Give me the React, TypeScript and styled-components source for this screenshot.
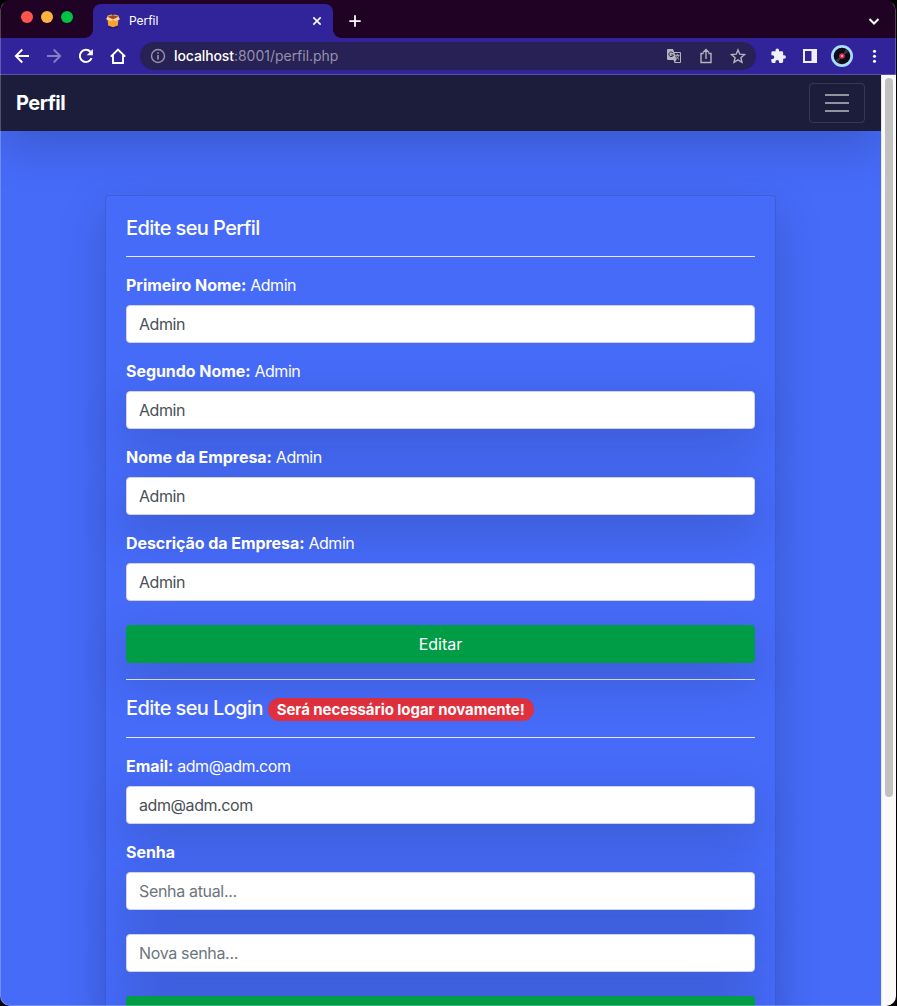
import React from "react";
import styled, { createGlobalStyle, css } from "styled-components";

const GlobalStyle = createGlobalStyle`
  *, *::before, *::after { box-sizing: border-box; }
  html, body { margin: 0; height: 100%; overflow: hidden; background: #000; }
  body { font-family: Inter, "Liberation Sans", sans-serif; font-size: 16px; line-height: 1.5; color: #fff; }
`;

const shadow = css`
  box-shadow: 0 16px 48px rgba(0, 0, 0, 0.175);
`;

const Window = styled.div`
  position: relative;
  display: flex;
  flex-direction: column;
  width: 896px;
  height: 1006px;
  border-radius: 10px;
  overflow: hidden;
  background: #200324;
  &::after {
    content: "";
    position: absolute;
    inset: 0;
    border: 1px solid rgba(255, 255, 255, 0.24);
    border-top-color: transparent;
    border-radius: 10px;
    pointer-events: none;
  }
`;

const TabStrip = styled.div`
  display: flex;
  height: 38px;
  flex: none;
  padding-left: 21px;
`;

const Lights = styled.div`
  display: flex;
  gap: 8px;
  padding-top: 11px;
  width: 72px;
`;

const Light = styled.span<{ $color: string }>`
  width: 12px;
  height: 12px;
  border-radius: 50%;
  background: ${(p) => p.$color};
`;

const Tab = styled.div`
  position: relative;
  display: flex;
  align-items: center;
  width: 240px;
  height: 34px;
  margin-top: 4px;
  padding: 0 9px 0 12px;
  border-radius: 8px 8px 0 0;
  background: #31239a;
  &::before, &::after {
    content: "";
    position: absolute;
    bottom: 0;
    width: 8px;
    height: 8px;
  }
  &::before { left: -8px; background: radial-gradient(circle at 0 0, transparent 7.5px, #31239a 8px); }
  &::after { right: -8px; background: radial-gradient(circle at 100% 0, transparent 7.5px, #31239a 8px); }
`;

const TabTitle = styled.span`
  flex: 1;
  margin-left: 8px;
  font-size: 12px;
  line-height: 16px;
  letter-spacing: -0.05px;
`;

const NewTab = styled.div`
  display: flex;
  flex: 1;
  align-items: center;
  justify-content: space-between;
  padding: 4px 14px 0 15px;
`;

const Toolbar = styled.div`
  display: flex;
  align-items: center;
  flex: none;
  height: 37px;
  padding: 0 13px 1px 14px;
  background: #31239a;
  border-bottom: 1px solid #5b50ae;
`;

const NavIcons = styled.div`
  display: flex;
  gap: 16px;
  width: 126px;
`;

const AddressBar = styled.div`
  display: flex;
  align-items: center;
  width: 616px;
  height: 28px;
  padding: 0 10px;
  border-radius: 14px;
  background: #282156;
`;

const Url = styled.span`
  flex: 1;
  margin-left: 8px;
  font-size: 14px;
  line-height: 20px;
  letter-spacing: -0.02px;
  color: #9491ab;
  b { font-weight: 500; letter-spacing: -0.1px; color: #fff; }
`;

const AddressIcons = styled.div`
  display: flex;
  gap: 16px;
`;

const Extensions = styled.div`
  display: flex;
  align-items: center;
  gap: 14px;
  flex: 1;
  padding-left: 14px;
`;

const Viewport = styled.div`
  display: flex;
  flex: 1;
  min-height: 0;
`;

const Page = styled.div`
  display: flex;
  flex-direction: column;
  width: 881px;
  overflow: hidden;
  background: #466bf9;
`;

const Navbar = styled.nav`
  display: flex;
  flex: none;
  align-items: center;
  justify-content: space-between;
  height: 56px;
  padding: 0 16px;
  background: #1c1c3b;
  ${shadow}
`;

const Brand = styled.span`
  font-size: 20px;
  font-weight: 700;
  line-height: 30px;
  letter-spacing: -0.5px;
`;

const Toggler = styled.div`
  display: flex;
  align-items: center;
  justify-content: center;
  width: 56px;
  height: 40px;
  border: 1px solid rgba(255, 255, 255, 0.12);
  border-radius: 4px;
`;

const Card = styled.main`
  flex: none;
  align-self: center;
  width: 671px;
  height: 900px;
  margin-top: 64px;
  padding: 20px;
  border: 1px solid rgba(0, 0, 0, 0.125);
  border-radius: 4px;
  background: #466bf9;
  ${shadow}
`;

const Heading = styled.h5<{ $height?: number }>`
  margin: 0;
  height: ${(p) => p.$height ?? 24}px;
  font-size: 20px;
  font-weight: 500;
  line-height: 24px;
  letter-spacing: -0.6px;
  white-space: nowrap;
`;

const Badge = styled.span`
  display: inline-block;
  padding: 4px 9px;
  border-radius: 160px;
  background: #e3313f;
  font-size: 15px;
  font-weight: 700;
  line-height: 15px;
  letter-spacing: -0.05px;
`;

const Rule = styled.hr`
  height: 1px;
  margin: 16px 0;
  border: 0;
  background: #e6e9f8;
`;

const Group = styled.div<{ $gap?: number }>`
  position: relative;
  margin-bottom: ${(p) => p.$gap ?? 16}px;
`;

const Label = styled.label`
  display: block;
  margin-bottom: 8px;
  line-height: 24px;
  letter-spacing: -0.48px;
  b { font-weight: 700; letter-spacing: -0.06px; }
`;

const Input = styled.input<{ $flat?: boolean }>`
  position: relative;
  display: block;
  width: 100%;
  height: 38px;
  padding: 6px 12px;
  border: 1px solid #ced4da;
  border-radius: 4px;
  background: #fff;
  color: #495057;
  font: inherit;
  letter-spacing: -0.42px;
  outline: none;
  &::placeholder { color: #6c757d; opacity: 1; letter-spacing: -0.33px; }
  ${(p) => !p.$flat && shadow}
`;

const Submit = styled.button`
  position: relative;
  display: block;
  width: 100%;
  height: 38px;
  padding: 0;
  border: 0;
  border-radius: 4px;
  background: #009c46;
  color: #fff;
  font: inherit;
  ${shadow}
`;

const Scrollbar = styled.div`
  width: 15px;
  padding: 3px 3px 0;
  background: #fafafa;
  border-left: 1px solid #e8e8e8;
`;

const Thumb = styled.div`
  width: 8px;
  height: 719px;
  border-radius: 4px;
  background: #c1c1c1;
`;

const Stroke = ({ d, size = 16, color = "#fff", w = 1.8 }: { d: string; size?: number; color?: string; w?: number }) => (
  <svg width={size} height={size} viewBox="0 0 16 16" fill="none" stroke={color} strokeWidth={w}>
    <path d={d} />
  </svg>
);

const BoxIcon = () => (
  <svg width="16" height="16" viewBox="0 0 16 16">
    <ellipse cx="8" cy="14.3" rx="5" ry="1" fill="#241a66" />
    <path d="M2.5 6h11l-.7 6.500L8 14.200l-4.800-1.700z" fill="#f9a233" />
    <path d="M2.500 3.800 8 2l5.500 1.800L8 6.500z" fill="#a8481a" />
    <path d="M2.500 3.800 8 6.200 6.300 8.300 1 6.300zM13.500 3.800 8 6.200l1.700 2.100L15 6.300z" fill="#ffd597" />
    <path d="M2.500 3.800 1.700 3 6.500 1.500 8 2.200zM13.500 3.800l.8-.8L9.500 1.500 8 2.200z" fill="#f6b562" />
  </svg>
);

const Field = ({ label, value, flat, gap }: { label: string; value: string; flat?: boolean; gap?: number }) => (
  <Group $gap={gap}>
    <Label><b>{label}</b> {value}</Label>
    <Input defaultValue={value} $flat={flat} />
  </Group>
);

export default function App() {
  return (
    <>
      <GlobalStyle />
      <Window>
        <TabStrip>
          <Lights>
            <Light $color="#ff554f" />
            <Light $color="#ffb33f" />
            <Light $color="#00c144" />
          </Lights>
          <Tab>
            <BoxIcon />
            <TabTitle>Perfil</TabTitle>
            <Stroke d="M3.800 3.800l8.400 8.400M12.200 3.800l-8.400 8.400" size={14} w={1.8} />
          </Tab>
          <NewTab>
            <Stroke d="M8 1.500v13M1.500 8h13" size={14} w={2} />
            <Stroke d="M3.500 6 8 10.500 12.500 6" w={2} />
          </NewTab>
        </TabStrip>
        <Toolbar>
          <NavIcons>
            <Stroke d="M15 8H2M8.300 1.500 1.800 8l6.500 6.500" w={1.9} />
            <Stroke d="M1 8h13M7.700 1.500 14.200 8l-6.500 6.500" color="#857cc3" w={1.9} />
            <svg width="16" height="16" viewBox="0 0 16 16" fill="none">
              <path d="M13.600 10.200A6.100 6.100 0 1 1 12.400 3.700" stroke="#fff" strokeWidth="2" />
              <path d="M14.900 1v6.200H8.700z" fill="#fff" />
            </svg>
            <Stroke d="M.8 8.700 8 1.500l7.200 7.200M3 7v8h10V7" w={1.9} />
          </NavIcons>
          <AddressBar>
            <svg width="16" height="16" viewBox="0 0 16 16" fill="none" stroke="#9895a6" strokeWidth="1.4">
              <circle cx="8" cy="8" r="6.500" />
              <path d="M8 7v4.500M8 4.200v1.600" strokeWidth="1.7" />
            </svg>
            <Url><b>localhost</b>:8001/perfil.php</Url>
            <AddressIcons>
              <svg width="16" height="16" viewBox="0 0 16 16">
                <path d="M2 1h5l1.200 3H14a1 1 0 0 1 1 1v9a1 1 0 0 1-1 1H8.500l-1-3H2a1 1 0 0 1-1-1V2a1 1 0 0 1 1-1z" fill="#b5b3bb" />
                <path d="M8.600 5H14v9H9l1.500-2z" fill="#282156" />
                <path d="M7.200 5.200A2.300 2.300 0 1 0 7.400 7H5.200" fill="none" stroke="#282156" strokeWidth="1" />
                <path d="M9.200 7.300h4.300M11.300 6v1.300M12.700 7.500c-.4 1.700-1.500 2.900-3 3.800M10.300 8.300c.6 1.300 1.500 2.400 2.700 3.200" fill="none" stroke="#b5b3bb" strokeWidth="1" />
              </svg>
              <Stroke d="M5.500 5.500H3v9h10v-9h-2.500M8 11V2M5 4.600l3-3 3 3" color="#b5b3bb" w={1.4} />
              <Stroke d="M8 1.900l1.800 4.300 4.700.4-3.600 3.100 1.100 4.600L8 11.900l-4 2.400 1.100-4.600-3.600-3.100 4.700-.4z" color="#b5b3bb" w={1.4} />
            </AddressIcons>
          </AddressBar>
          <Extensions>
            <svg width="18" height="18" viewBox="0 0 26 26" fill="#f1f0fa">
              <path d="M20.500 12H19V8a2 2 0 0 0-2-2h-4V4.500a2.500 2.500 0 0 0-5 0V6H4a2 2 0 0 0-2 2v3.800h1.500a2.700 2.700 0 0 1 0 5.400H2V21a2 2 0 0 0 2 2h3.800v-1.500a2.700 2.700 0 0 1 5.400 0V23H17a2 2 0 0 0 2-2v-4h1.500a2.500 2.500 0 0 0 0-5z" />
            </svg>
            <svg width="15" height="14" viewBox="0 0 15 14">
              <path fillRule="evenodd" d="M1 0h14v14H1zM3 2v10h6.500V2z" fill="#f1f0fa" />
            </svg>
            <svg width="22" height="22" viewBox="0 0 22 22">
              <circle cx="11" cy="11" r="11" fill="#a9dcfb" />
              <circle cx="11" cy="11" r="8.300" fill="#0d0c16" />
              <path d="M11 11 15 4.200A8 8 0 0 1 17.500 7zM11 11 7 17.800A8 8 0 0 1 4.500 15z" fill="#34353f" />
              <circle cx="11" cy="11" r="2.800" fill="#d9285e" />
              <circle cx="11" cy="11" r="1.200" fill="#ffa890" />
            </svg>
            <svg width="16" height="16" viewBox="0 0 16 16" fill="#fff">
              <circle cx="7.500" cy="3.300" r="1.550" />
              <circle cx="7.500" cy="8.200" r="1.550" />
              <circle cx="7.500" cy="13.200" r="1.550" />
            </svg>
          </Extensions>
        </Toolbar>
        <Viewport>
          <Page>
            <Navbar>
              <Brand>Perfil</Brand>
              <Toggler>
                <svg width="24" height="18" viewBox="0 0 24 18" stroke="#93939f" strokeWidth="2">
                  <path d="M0 1h24M0 9h24M0 17h24" />
                </svg>
              </Toggler>
            </Navbar>
            <Card>
              <Heading>Edite seu Perfil</Heading>
              <Rule />
              <Field label="Primeiro Nome:" value="Admin" flat />
              <Field label="Segundo Nome:" value="Admin" />
              <Field label="Nome da Empresa:" value="Admin" />
              <Field label="Descrição da Empresa:" value="Admin" flat gap={24} />
              <Submit>Editar</Submit>
              <Rule />
              <Heading $height={25}>Edite seu Login <Badge>Será necessário logar novamente!</Badge></Heading>
              <Rule />
              <Field label="Email:" value="adm@adm.com" />
              <Group $gap={24}>
                <Label><b>Senha</b></Label>
                <Input placeholder="Senha atual..." />
              </Group>
              <Group $gap={24}>
                <Input placeholder="Nova senha..." />
              </Group>
              <Submit />
            </Card>
          </Page>
          <Scrollbar><Thumb /></Scrollbar>
        </Viewport>
      </Window>
    </>
  );
}
